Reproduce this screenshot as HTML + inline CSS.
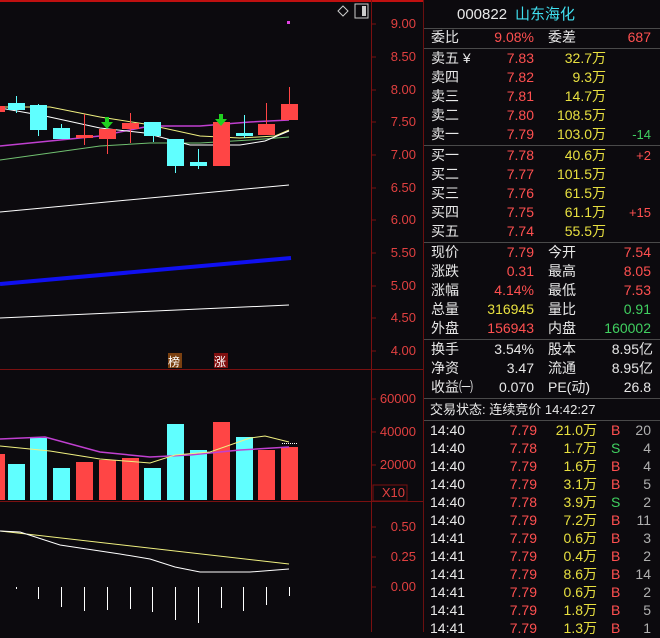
<!DOCTYPE html>
<html><head><meta charset="utf-8"><style>
html,body{margin:0;padding:0;background:#0c0a0e;width:660px;height:632px;overflow:hidden;font-family:"Liberation Sans","Noto Sans CJK SC",sans-serif;}
#p{position:absolute;left:423px;top:0;width:237px;height:632px;border-left:1px solid #6a1010;}
.r{position:absolute;left:0;width:237px;height:19px;font-size:14px;line-height:19px;white-space:nowrap;}
.r span{position:absolute;}
.w{color:#e8e8e8}.rd{color:#ff5050}.y{color:#e8e040}.g{color:#40d060}.c{color:#40e0f0}.gr{color:#b0b0b0}
.hl{position:absolute;left:0;width:237px;height:1px;background:#4a4a4a;}
.ax{position:absolute;font-size:13px;color:#e04040;right:244px;text-align:right;}
</style></head><body>
<svg width="423" height="632" style="position:absolute;left:0;top:0" xmlns="http://www.w3.org/2000/svg">
<rect x="0" y="0" width="660" height="2" fill="#c01010"/>
<line x1="371.5" y1="0" x2="371.5" y2="632" stroke="#7a1010"/>
<line x1="0" y1="369.5" x2="423" y2="369.5" stroke="#7a1010"/>
<line x1="0" y1="501.5" x2="423" y2="501.5" stroke="#7a1010"/>
<g stroke="#7a1010">
<line x1="371" y1="24" x2="376" y2="24"/><line x1="371" y1="57" x2="376" y2="57"/><line x1="371" y1="90" x2="376" y2="90"/><line x1="371" y1="122" x2="376" y2="122"/><line x1="371" y1="155" x2="376" y2="155"/><line x1="371" y1="188" x2="376" y2="188"/><line x1="371" y1="220" x2="376" y2="220"/><line x1="371" y1="253" x2="376" y2="253"/><line x1="371" y1="286" x2="376" y2="286"/><line x1="371" y1="318" x2="376" y2="318"/><line x1="371" y1="351" x2="376" y2="351"/>
<line x1="371" y1="399" x2="376" y2="399"/><line x1="371" y1="432" x2="376" y2="432"/><line x1="371" y1="465" x2="376" y2="465"/>
<line x1="371" y1="527" x2="376" y2="527"/><line x1="371" y1="557" x2="376" y2="557"/><line x1="371" y1="587" x2="376" y2="587"/>
</g>
<rect x="373" y="485" width="34" height="16" fill="none" stroke="#7a1010"/>
<polygon points="343,6 348,11 343,16 338,11" fill="none" stroke="#ccc"/>
<rect x="355" y="4" width="13" height="14" fill="none" stroke="#ccc"/><rect x="362" y="6" width="4" height="10" fill="#ccc"/>
<rect x="287" y="21" width="3" height="3" fill="#e040e0"/>
<polyline points="0,212 289,185" fill="none" stroke="#fff" stroke-width="1"/>
<polyline points="0,284 291,258" fill="none" stroke="#1010f0" stroke-width="4"/>
<polyline points="0,318 289,305" fill="none" stroke="#fff" stroke-width="1"/>
<polyline points="0,160 100,146 150,143 200,143 250,140 289,137" fill="none" stroke="#70c070"/>
<polyline points="0,146 100,136 150,126 200,126 250,122 289,120" fill="none" stroke="#c040d0" stroke-width="1.5"/>
<polyline points="0,107 50,107 100,117 145,124 200,136 240,138 275,136 289,130" fill="none" stroke="#f0f080"/>
<polyline points="0,108 45,116 100,128 145,133 190,145 240,145 265,141 289,131" fill="none" stroke="#fff"/>
<g stroke-width="1">
<rect x="0" y="106" width="5" height="6" fill="#ff4545"/>
<line x1="16.5" y1="96" x2="16.5" y2="113" stroke="#60ffff"/><rect x="8" y="103" width="17" height="7" fill="#60ffff"/>
<line x1="38.5" y1="104" x2="38.5" y2="136" stroke="#60ffff"/><rect x="30" y="105" width="17" height="25" fill="#60ffff"/>
<line x1="61.5" y1="124" x2="61.5" y2="139" stroke="#60ffff"/><rect x="53" y="128" width="17" height="11" fill="#60ffff"/>
<line x1="84.5" y1="114" x2="84.5" y2="145" stroke="#ff4545"/><rect x="76" y="135" width="17" height="3" fill="#ff4545"/>
<line x1="107.5" y1="129" x2="107.5" y2="154" stroke="#ff4545"/><rect x="99" y="129" width="17" height="10" fill="#ff4545"/>
<line x1="130.5" y1="113" x2="130.5" y2="143" stroke="#ff4545"/><rect x="122" y="123" width="17" height="6" fill="#ff4545"/>
<line x1="153.5" y1="122" x2="153.5" y2="142" stroke="#60ffff"/><rect x="144" y="122" width="17" height="14" fill="#60ffff"/>
<line x1="175.5" y1="139" x2="175.5" y2="173" stroke="#60ffff"/><rect x="167" y="139" width="17" height="27" fill="#60ffff"/>
<line x1="198.5" y1="149" x2="198.5" y2="169" stroke="#60ffff"/><rect x="190" y="162" width="17" height="4" fill="#60ffff"/>
<rect x="213" y="122" width="17" height="44" fill="#ff4545"/>
<line x1="244.5" y1="115" x2="244.5" y2="138" stroke="#60ffff"/><rect x="236" y="133" width="17" height="3" fill="#60ffff"/>
<line x1="266.5" y1="103" x2="266.5" y2="124" stroke="#ff4545"/><rect x="258" y="124" width="17" height="11" fill="#ff4545"/>
<line x1="289.5" y1="87" x2="289.5" y2="104" stroke="#ff4545"/><rect x="281" y="104" width="17" height="16" fill="#ff4545"/>
</g>
<g fill="#20d020"><rect x="105" y="117" width="4" height="6"/><polygon points="101,122 113,122 107,129"/>
<rect x="219" y="114" width="4" height="6"/><polygon points="215,119 227,119 221,126"/></g>
<rect x="168" y="353" width="14" height="15" fill="#7a4010"/><text x="168" y="366" font-size="12" fill="#fff" font-family="Noto Sans CJK SC,sans-serif">榜</text>
<rect x="214" y="353" width="14" height="15" fill="#801010"/><text x="214" y="366" font-size="12" fill="#fff" font-family="Noto Sans CJK SC,sans-serif">涨</text>
<g>
<rect x="0" y="454" width="5" height="46" fill="#ff4545"/>
<rect x="8" y="464" width="17" height="36" fill="#60ffff"/>
<rect x="30" y="438" width="17" height="62" fill="#60ffff"/>
<rect x="53" y="468" width="17" height="32" fill="#60ffff"/>
<rect x="76" y="462" width="17" height="38" fill="#ff4545"/>
<rect x="99" y="460" width="17" height="40" fill="#ff4545"/>
<rect x="122" y="458" width="17" height="42" fill="#ff4545"/>
<rect x="144" y="468" width="17" height="32" fill="#60ffff"/>
<rect x="167" y="424" width="17" height="76" fill="#60ffff"/>
<rect x="190" y="450" width="17" height="50" fill="#60ffff"/>
<rect x="213" y="422" width="17" height="78" fill="#ff4545"/>
<rect x="236" y="437" width="17" height="63" fill="#60ffff"/>
<rect x="258" y="450" width="17" height="50" fill="#ff4545"/>
<rect x="281" y="447" width="17" height="53" fill="#ff4545"/>
</g>
<polyline points="0,439 45,437 100,452 150,457 190,455 240,450 289,447" fill="none" stroke="#c040d0" stroke-width="1.5"/>
<polyline points="0,446 50,451 100,459 150,463 175,455 210,452 250,438 265,436 289,442" fill="none" stroke="#f0f080"/>
<line x1="282" y1="443.5" x2="298" y2="443.5" stroke="#fff" stroke-dasharray="1,1"/>
<polyline points="0,531 289,564" fill="none" stroke="#f0f080"/>
<polyline points="0,531 20,532 60,545 120,554 150,559 175,567 200,572 250,572 289,569" fill="none" stroke="#fff"/>
<g stroke="#fff" stroke-width="1">
<line x1="16.5" y1="587" x2="16.5" y2="589"/><line x1="38.5" y1="587" x2="38.5" y2="599"/><line x1="61.5" y1="587" x2="61.5" y2="607"/><line x1="84.5" y1="587" x2="84.5" y2="611"/><line x1="107.5" y1="587" x2="107.5" y2="610"/><line x1="130.5" y1="587" x2="130.5" y2="609"/><line x1="152.5" y1="587" x2="152.5" y2="612"/><line x1="175.5" y1="587" x2="175.5" y2="620"/><line x1="198.5" y1="587" x2="198.5" y2="623"/><line x1="221.5" y1="587" x2="221.5" y2="608"/><line x1="243.5" y1="587" x2="243.5" y2="611"/><line x1="266.5" y1="587" x2="266.5" y2="605"/><line x1="289.5" y1="587" x2="289.5" y2="596"/>
</g>
</svg>
<div class="ax" style="top:16px">9.00</div><div class="ax" style="top:49px">8.50</div><div class="ax" style="top:82px">8.00</div><div class="ax" style="top:114px">7.50</div><div class="ax" style="top:147px">7.00</div><div class="ax" style="top:180px">6.50</div><div class="ax" style="top:212px">6.00</div><div class="ax" style="top:245px">5.50</div><div class="ax" style="top:278px">5.00</div><div class="ax" style="top:310px">4.50</div><div class="ax" style="top:343px">4.00</div>
<div class="ax" style="top:391px">60000</div><div class="ax" style="top:424px">40000</div><div class="ax" style="top:457px">20000</div>
<div class="ax" style="top:485px;right:255px">X10</div>
<div class="ax" style="top:519px">0.50</div><div class="ax" style="top:549px">0.25</div><div class="ax" style="top:579px">0.00</div>

<div id="p">
<div class="r" style="top:5px;font-size:15px"><span class="w" style="left:33px">000822</span><span class="c" style="left:91px">山东海化</span></div>
<div class="hl" style="top:28px"></div>
<div class="r" style="top:28px"><span class="w" style="left:7px">委比</span><span class="rd" style="right:127px">9.08%</span><span class="w" style="left:124px">委差</span><span class="rd" style="right:10px">687</span></div>
<div class="hl" style="top:48px"></div>
<div class="r" style="top:49px"><span class="w" style="left:7px">卖五 ¥</span><span class="rd" style="right:127px">7.83</span><span class="y" style="right:55px">32.7万</span></div>
<div class="r" style="top:68px"><span class="w" style="left:7px">卖四</span><span class="rd" style="right:127px">7.82</span><span class="y" style="right:55px">9.3万</span></div>
<div class="r" style="top:87px"><span class="w" style="left:7px">卖三</span><span class="rd" style="right:127px">7.81</span><span class="y" style="right:55px">14.7万</span></div>
<div class="r" style="top:106px"><span class="w" style="left:7px">卖二</span><span class="rd" style="right:127px">7.80</span><span class="y" style="right:55px">108.5万</span></div>
<div class="r" style="top:125px"><span class="w" style="left:7px">卖一</span><span class="rd" style="right:127px">7.79</span><span class="y" style="right:55px">103.0万</span><span class="g" style="right:10px;font-size:13px">-14</span></div>
<div class="hl" style="top:145px"></div>
<div class="r" style="top:146px"><span class="w" style="left:7px">买一</span><span class="rd" style="right:127px">7.78</span><span class="y" style="right:55px">40.6万</span><span class="rd" style="right:10px;font-size:13px">+2</span></div>
<div class="r" style="top:165px"><span class="w" style="left:7px">买二</span><span class="rd" style="right:127px">7.77</span><span class="y" style="right:55px">101.5万</span></div>
<div class="r" style="top:184px"><span class="w" style="left:7px">买三</span><span class="rd" style="right:127px">7.76</span><span class="y" style="right:55px">61.5万</span></div>
<div class="r" style="top:203px"><span class="w" style="left:7px">买四</span><span class="rd" style="right:127px">7.75</span><span class="y" style="right:55px">61.1万</span><span class="rd" style="right:10px;font-size:13px">+15</span></div>
<div class="r" style="top:222px"><span class="w" style="left:7px">买五</span><span class="rd" style="right:127px">7.74</span><span class="y" style="right:55px">55.5万</span></div>
<div class="hl" style="top:242px"></div>
<div class="r" style="top:243px"><span class="w" style="left:7px">现价</span><span class="rd" style="right:127px">7.79</span><span class="w" style="left:124px">今开</span><span class="rd" style="right:10px">7.54</span></div>
<div class="r" style="top:262px"><span class="w" style="left:7px">涨跌</span><span class="rd" style="right:127px">0.31</span><span class="w" style="left:124px">最高</span><span class="rd" style="right:10px">8.05</span></div>
<div class="r" style="top:281px"><span class="w" style="left:7px">涨幅</span><span class="rd" style="right:127px">4.14%</span><span class="w" style="left:124px">最低</span><span class="rd" style="right:10px">7.53</span></div>
<div class="r" style="top:300px"><span class="w" style="left:7px">总量</span><span class="y" style="right:127px">316945</span><span class="w" style="left:124px">量比</span><span class="g" style="right:10px">0.91</span></div>
<div class="r" style="top:319px"><span class="w" style="left:7px">外盘</span><span class="rd" style="right:127px">156943</span><span class="w" style="left:124px">内盘</span><span class="g" style="right:10px">160002</span></div>
<div class="hl" style="top:339px"></div>
<div class="r" style="top:340px"><span class="w" style="left:7px">换手</span><span class="w" style="right:127px">3.54%</span><span class="w" style="left:124px">股本</span><span class="w" style="right:8px">8.95亿</span></div>
<div class="r" style="top:359px"><span class="w" style="left:7px">净资</span><span class="w" style="right:127px">3.47</span><span class="w" style="left:124px">流通</span><span class="w" style="right:8px">8.95亿</span></div>
<div class="r" style="top:378px"><span class="w" style="left:7px">收益㈠</span><span class="w" style="right:127px">0.070</span><span class="w" style="left:124px">PE(动)</span><span class="w" style="right:10px">26.8</span></div>
<div class="hl" style="top:398px"></div>
<div class="r" style="top:400px;font-size:13px"><span class="w" style="left:6px">交易状态: 连续竞价 14:42:27</span></div>
<div class="hl" style="top:420px"></div>
<div class="r" style="top:421px"><span class="w" style="left:6px">14:40</span><span class="rd" style="right:124px">7.79</span><span class="y" style="right:64px">21.0万</span><span class="rd" style="left:187px">B</span><span class="gr" style="right:10px">20</span></div>
<div class="r" style="top:439px"><span class="w" style="left:6px">14:40</span><span class="rd" style="right:124px">7.78</span><span class="y" style="right:64px">1.7万</span><span class="g" style="left:187px">S</span><span class="gr" style="right:10px">4</span></div>
<div class="r" style="top:457px"><span class="w" style="left:6px">14:40</span><span class="rd" style="right:124px">7.79</span><span class="y" style="right:64px">1.6万</span><span class="rd" style="left:187px">B</span><span class="gr" style="right:10px">4</span></div>
<div class="r" style="top:475px"><span class="w" style="left:6px">14:40</span><span class="rd" style="right:124px">7.79</span><span class="y" style="right:64px">3.1万</span><span class="rd" style="left:187px">B</span><span class="gr" style="right:10px">5</span></div>
<div class="r" style="top:493px"><span class="w" style="left:6px">14:40</span><span class="rd" style="right:124px">7.78</span><span class="y" style="right:64px">3.9万</span><span class="g" style="left:187px">S</span><span class="gr" style="right:10px">2</span></div>
<div class="r" style="top:511px"><span class="w" style="left:6px">14:40</span><span class="rd" style="right:124px">7.79</span><span class="y" style="right:64px">7.2万</span><span class="rd" style="left:187px">B</span><span class="gr" style="right:10px">11</span></div>
<div class="r" style="top:529px"><span class="w" style="left:6px">14:41</span><span class="rd" style="right:124px">7.79</span><span class="y" style="right:64px">0.6万</span><span class="rd" style="left:187px">B</span><span class="gr" style="right:10px">3</span></div>
<div class="r" style="top:547px"><span class="w" style="left:6px">14:41</span><span class="rd" style="right:124px">7.79</span><span class="y" style="right:64px">0.4万</span><span class="rd" style="left:187px">B</span><span class="gr" style="right:10px">2</span></div>
<div class="r" style="top:565px"><span class="w" style="left:6px">14:41</span><span class="rd" style="right:124px">7.79</span><span class="y" style="right:64px">8.6万</span><span class="rd" style="left:187px">B</span><span class="gr" style="right:10px">14</span></div>
<div class="r" style="top:583px"><span class="w" style="left:6px">14:41</span><span class="rd" style="right:124px">7.79</span><span class="y" style="right:64px">0.6万</span><span class="rd" style="left:187px">B</span><span class="gr" style="right:10px">2</span></div>
<div class="r" style="top:601px"><span class="w" style="left:6px">14:41</span><span class="rd" style="right:124px">7.79</span><span class="y" style="right:64px">1.8万</span><span class="rd" style="left:187px">B</span><span class="gr" style="right:10px">5</span></div>
<div class="r" style="top:619px"><span class="w" style="left:6px">14:41</span><span class="rd" style="right:124px">7.79</span><span class="y" style="right:64px">1.3万</span><span class="rd" style="left:187px">B</span><span class="gr" style="right:10px">1</span></div>
</div>
</body></html>
